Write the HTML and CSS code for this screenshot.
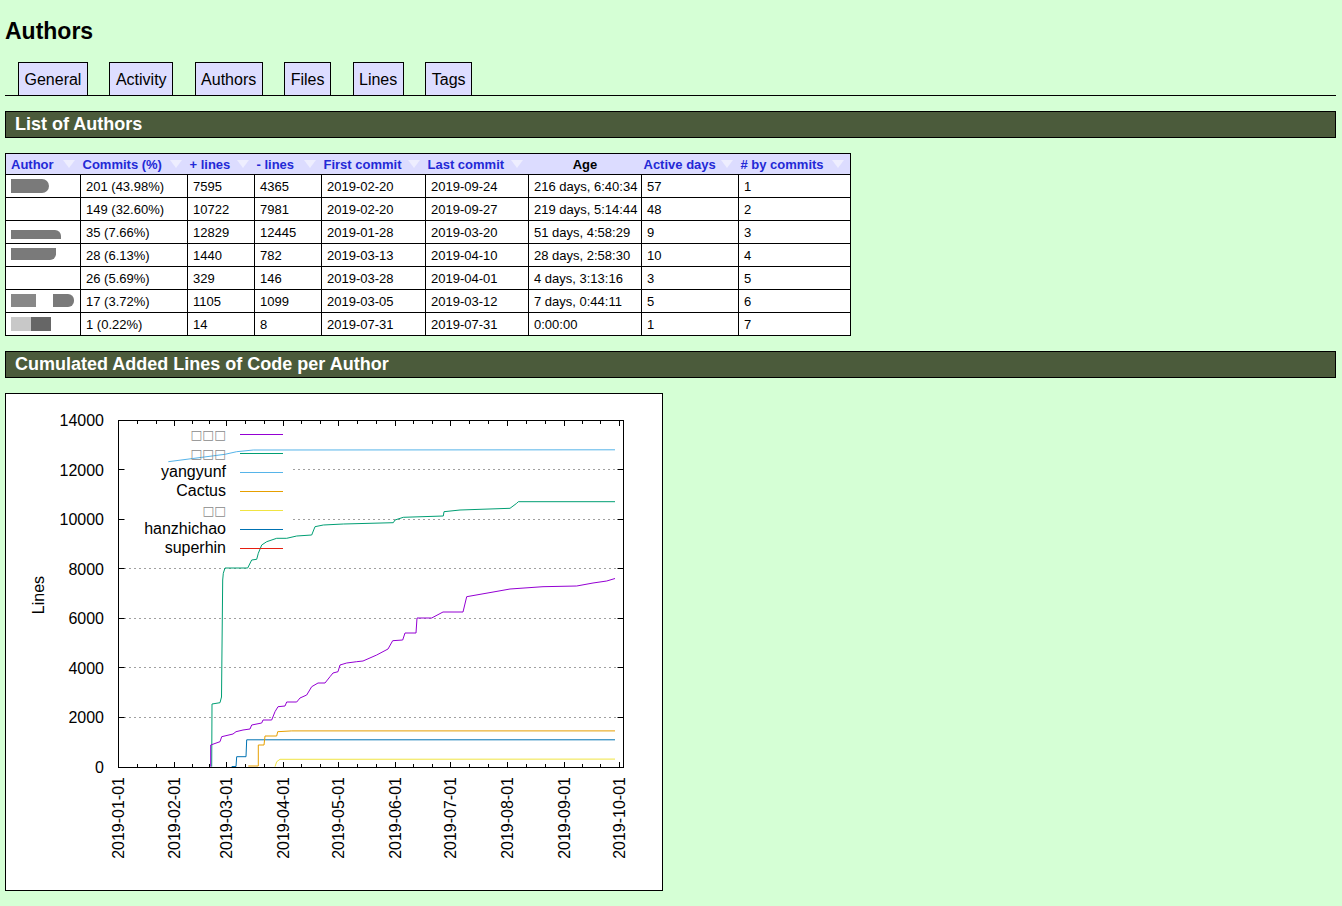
FILE: index.html
```html
<!DOCTYPE html>
<html>
<head>
<meta charset="utf-8">
<title>GitStats - Authors</title>
<link rel="stylesheet" href="styles.css">
</head>
<body>
<h1 class="title">Authors</h1>
<div class="nav">
  <a class="tab" href="#">General</a>
  <a class="tab" href="#">Activity</a>
  <a class="tab" href="#">Authors</a>
  <a class="tab" href="#">Files</a>
  <a class="tab" href="#">Lines</a>
  <a class="tab" href="#">Tags</a>
</div>

<h2 class="section">List of Authors</h2>
<table class="authors">
  <colgroup>
    <col class="c-author"><col class="c-commits"><col class="c-plus"><col class="c-minus"><col class="c-first"><col class="c-last"><col class="c-age"><col class="c-active"><col class="c-rank">
  </colgroup>
  <thead>
    <tr>
      <th class="sort first">Author<span class="arrow"></span></th>
      <th class="sort">Commits (%)<span class="arrow"></span></th>
      <th class="sort">+ lines<span class="arrow"></span></th>
      <th class="sort">- lines<span class="arrow"></span></th>
      <th class="sort">First commit<span class="arrow"></span></th>
      <th class="sort">Last commit<span class="arrow"></span></th>
      <th class="age">Age</th>
      <th class="sort">Active days<span class="arrow"></span></th>
      <th class="sort"># by commits<span class="arrow"></span></th>
    </tr>
  </thead>
  <tbody>
    <tr><td class="who"><span class="blob b1"></span></td><td>201 (43.98%)</td><td>7595</td><td>4365</td><td>2019-02-20</td><td>2019-09-24</td><td>216 days, 6:40:34</td><td>57</td><td>1</td></tr>
    <tr><td class="who"></td><td>149 (32.60%)</td><td>10722</td><td>7981</td><td>2019-02-20</td><td>2019-09-27</td><td>219 days, 5:14:44</td><td>48</td><td>2</td></tr>
    <tr><td class="who"><span class="blob b3"></span></td><td>35 (7.66%)</td><td>12829</td><td>12445</td><td>2019-01-28</td><td>2019-03-20</td><td>51 days, 4:58:29</td><td>9</td><td>3</td></tr>
    <tr><td class="who"><span class="blob b4"></span></td><td>28 (6.13%)</td><td>1440</td><td>782</td><td>2019-03-13</td><td>2019-04-10</td><td>28 days, 2:58:30</td><td>10</td><td>4</td></tr>
    <tr><td class="who"></td><td>26 (5.69%)</td><td>329</td><td>146</td><td>2019-03-28</td><td>2019-04-01</td><td>4 days, 3:13:16</td><td>3</td><td>5</td></tr>
    <tr><td class="who"><span class="blob b6a"></span><span class="blob b6b"></span></td><td>17 (3.72%)</td><td>1105</td><td>1099</td><td>2019-03-05</td><td>2019-03-12</td><td>7 days, 0:44:11</td><td>5</td><td>6</td></tr>
    <tr><td class="who"><span class="blob b7a"></span><span class="blob b7b"></span></td><td>1 (0.22%)</td><td>14</td><td>8</td><td>2019-07-31</td><td>2019-07-31</td><td>0:00:00</td><td>1</td><td>7</td></tr>
  </tbody>
</table>

<h2 class="section">Cumulated Added Lines of Code per Author</h2>
<div class="chart">
<svg class="plot" width="640" height="480" viewBox="0 0 640 480" xmlns="http://www.w3.org/2000/svg">
  <rect x="0" y="0" width="640" height="480" fill="#fff"/>
  <!-- grid -->
  <g stroke="#a0a0a0" stroke-width="1" stroke-dasharray="2 3" fill="none">
    <path d="M279 67.5H609 M279 117.5H609 M105 166.5H609 M105 216.5H609 M105 265.5H609 M105 315.5H609"/>
  </g>
  <!-- ticks -->
  <g stroke="#000" stroke-width="1" fill="none">
    <path d="M104.5 67.5h6 M104.5 117.5h6 M104.5 166.5h6 M104.5 216.5h6 M104.5 265.5h6 M104.5 315.5h6
             M609.5 67.5h-6 M609.5 117.5h-6 M609.5 166.5h-6 M609.5 216.5h-6 M609.5 265.5h-6 M609.5 315.5h-6"/>
    <path d="M160.5 365v-5 M212.5 365v-5 M269.5 365v-5 M324.5 365v-5 M381.5 365v-5 M436.5 365v-5 M493.5 365v-5 M550.5 365v-5 M605.5 365v-5
             M160.5 19v5 M212.5 19v5 M269.5 19v5 M324.5 19v5 M381.5 19v5 M436.5 19v5 M493.5 19v5 M550.5 19v5 M605.5 19v5"/>
    <path d="M123.5 365v-3 M142.5 365v-3 M178.5 365v-3 M195.5 365v-3 M231.5 365v-3 M250.5 365v-3 M287.5 365v-3 M306.5 365v-3 M343.5 365v-3 M362.5 365v-3 M399.5 365v-3 M418.5 365v-3 M455.5 365v-3 M474.5 365v-3 M512.5 365v-3 M531.5 365v-3 M568.5 365v-3 M586.5 365v-3
             M123.5 19v3 M142.5 19v3 M178.5 19v3 M195.5 19v3 M231.5 19v3 M250.5 19v3 M287.5 19v3 M306.5 19v3 M343.5 19v3 M362.5 19v3 M399.5 19v3 M418.5 19v3 M455.5 19v3 M474.5 19v3 M512.5 19v3 M531.5 19v3 M568.5 19v3 M586.5 19v3"/>
  </g>
  <!-- series -->
  <g fill="none" stroke-width="1" stroke-linejoin="round">
    <polyline stroke="#e51e10" points="491,365.5 601,365.5"/>
    <polyline stroke="#f0e442" points="261,364.7 262.7,359.7 266,357.3 601,357.1"/>
    <polyline stroke="#0072b2" points="217.7,364.5 222,364.5 222.7,354.7 232,354.7 232.7,337.8 601,337.8"/>
    <polyline stroke="#e69f00" points="234.3,364 244.3,364 244.3,343 250,343 251,334 262.7,334 263.7,329.7 277.7,328.9 601,328.9"/>
    <polyline stroke="#56b4e9" points="154.3,59.7 211,52.3 222.7,49.7 239.3,48 601,47.8"/>
    <polyline stroke="#009e73" points="197.7,364.7 198,302 206,300.7 207.5,295 208.7,178 209.3,171.3 211,166 233.7,166 237.7,158 242.7,157.3 244.3,151.3 247.7,143 252.7,139.7 262.7,136.3 272.7,136.3 282.7,134 297.7,133 301,124.7 309.3,123 329.3,122 379.3,120.7 381,118 389.3,115.3 429.3,114 430,109.7 446,108 496,106.3 502.7,101.3 504.3,99.7 601,99.7"/>
    <polyline stroke="#9400d3" points="196.7,364.7 196.7,343 206,339.7 207.7,334.7 219,332 222,329.7 229,328 236,327 237.7,323 247.7,321 249,318 257.7,318 261,309.7 264,304.7 271,304 272.7,300 282.7,300 286,296 292.7,293 297.7,284.7 304,281 311,281 316,274.7 319,271 324,269.7 326,263 332.7,261 342.7,259.7 349,259 362.7,253 374,247 378.7,238.7 388.7,238 391,231 402,231 403,216 417.7,216 429,210 449,210 452.7,194.7 481,189.7 496,187 529,184.7 562.7,184 579,181 592.7,179 601,176.5"/>
  </g>
  <!-- border -->
  <rect x="104.5" y="18.5" width="505" height="347" fill="none" stroke="#000" stroke-width="1"/>
  <!-- legend -->
  <g class="legend">
    <text class="tofu" x="212" y="37">□□□</text>
    <text class="tofu" x="212" y="56">□□□</text>
    <text x="212" y="75">yangyunf</text>
    <text x="212" y="94">Cactus</text>
    <text class="tofu" x="212" y="113">□□</text>
    <text x="212" y="132">hanzhichao</text>
    <text x="212" y="151">superhin</text>
  </g>
  <g stroke-width="1" fill="none">
    <path stroke="#9400d3" d="M226 32.5H269"/>
    <path stroke="#009e73" d="M226 51.5H269"/>
    <path stroke="#56b4e9" d="M226 70.5H269"/>
    <path stroke="#e69f00" d="M226 89.5H269"/>
    <path stroke="#f0e442" d="M226 108.5H269"/>
    <path stroke="#0072b2" d="M226 127.5H269"/>
    <path stroke="#e51e10" d="M226 146.5H269"/>
  </g>
  <!-- y labels -->
  <g class="ylab">
    <text x="90" y="24">14000</text>
    <text x="90" y="73.5">12000</text>
    <text x="90" y="123">10000</text>
    <text x="90" y="172.5">8000</text>
    <text x="90" y="222">6000</text>
    <text x="90" y="271.5">4000</text>
    <text x="90" y="321">2000</text>
    <text x="90" y="370.5">0</text>
  </g>
  <text class="axis-title" transform="translate(29.5,193) rotate(-90)">Lines</text>
  <!-- x labels -->
  <g class="xlab">
    <text transform="translate(109.5,375) rotate(-90)">2019-01-01</text>
    <text transform="translate(166,375) rotate(-90)">2019-02-01</text>
    <text transform="translate(217.5,375) rotate(-90)">2019-03-01</text>
    <text transform="translate(274.5,375) rotate(-90)">2019-04-01</text>
    <text transform="translate(329.5,375) rotate(-90)">2019-05-01</text>
    <text transform="translate(386.5,375) rotate(-90)">2019-06-01</text>
    <text transform="translate(441.5,375) rotate(-90)">2019-07-01</text>
    <text transform="translate(498.5,375) rotate(-90)">2019-08-01</text>
    <text transform="translate(555.5,375) rotate(-90)">2019-09-01</text>
    <text transform="translate(610.5,375) rotate(-90)">2019-10-01</text>
  </g>
</svg>
</div>
</body>
</html>
```

FILE: styles.css
```css
html, body {
  margin: 0;
}

body {
  padding: 0 6px 30px 5px;
  background-color: #d5ffd5;
  color: #000;
  font-family: "Liberation Sans", Arial, Helvetica, sans-serif;
}

.title {
  margin: 18px 0 0;
  font-size: 23px;
  line-height: 26px;
  font-weight: bold;
}

.nav {
  display: flex;
  align-items: flex-end;
  gap: 21.5px;
  margin: 18px 0 15px;
  padding-left: 13px;
  border-bottom: 1px solid #000;
}

.tab {
  display: block;
  padding: 8px 5.5px 6px;
  border: 1px solid #000;
  border-bottom: 0;
  background-color: #ddf;
  color: #000;
  font-size: 16px;
  line-height: 18px;
  text-decoration: none;
}

.section {
  margin: 15px 0;
  padding: 2px 9px;
  border: 1px solid #000;
  background-color: #4b5b3b;
  color: #fff;
  font-size: 18px;
  line-height: 21px;
  font-weight: bold;
}

.authors {
  width: 845px;
  table-layout: fixed;
  border-collapse: collapse;
  border: 1px solid #000;
  font-size: 13px;
  margin: 15px 0;
}

.c-author { width: 75px; }
.c-commits { width: 107px; }
.c-plus { width: 67px; }
.c-minus { width: 67px; }
.c-first { width: 104px; }
.c-last { width: 103px; }
.c-age { width: 113px; }
.c-active { width: 97px; }
.c-rank { width: 112px; }

.authors th {
  padding: 3px 2px 2px 2px;
  background-color: #dcdcff;
  font-weight: bold;
  line-height: 15px;
  text-align: left;
  white-space: nowrap;
  color: #2329d6;
  border: none;
}

.authors th.first {
  padding-left: 5px;
}

.authors th.age {
  text-align: center;
  color: #000;
}

.arrow {
  float: right;
  width: 0;
  height: 0;
  margin: 3px 4px 0 0;
  border-left: 6px solid transparent;
  border-right: 6px solid transparent;
  border-top: 8px solid #eeeeff;
}

.authors td {
  padding: 4px 5px 3px;
  border: 1px solid #000;
  background-color: #fff;
  line-height: 15px;
  height: 15px;
  white-space: nowrap;
  overflow: hidden;
}

.authors td.who {
  font-size: 0;
  line-height: 0;
  vertical-align: top;
}

.blob {
  display: inline-block;
  vertical-align: top;
  height: 14px;
  background-color: #7a7a7a;
}

.b1 { width: 38px; border-radius: 0 8px 8px 0; }
.b3 { width: 50px; height: 9px; margin-top: 5px; border-radius: 0 6px 0 0; }
.b4 { width: 45px; height: 12px; border-radius: 0 0 6px 0; }
.b6a { width: 25px; height: 13px; background-color: #888; }
.b6b { width: 21px; height: 13px; margin-left: 17px; border-radius: 0 6px 6px 0; }
.b7a { width: 20px; background-color: #c8c8c8; }
.b7b { width: 20px; background-color: #666; }

.chart {
  width: 640px;
  padding: 8px;
  border: 1px solid #000;
  background-color: #fff;
}

.plot {
  display: block;
  font-family: "Liberation Sans", Arial, Helvetica, sans-serif;
  font-size: 16px;
}

.legend text {
  text-anchor: end;
  fill: #000;
}

.legend .tofu {
  font-family: "DejaVu Sans", sans-serif;
  font-size: 12.5px;
  fill: #8a8a8a;
}

.ylab text {
  text-anchor: end;
}

.axis-title {
  text-anchor: middle;
}

.xlab text {
  text-anchor: end;
}
```
